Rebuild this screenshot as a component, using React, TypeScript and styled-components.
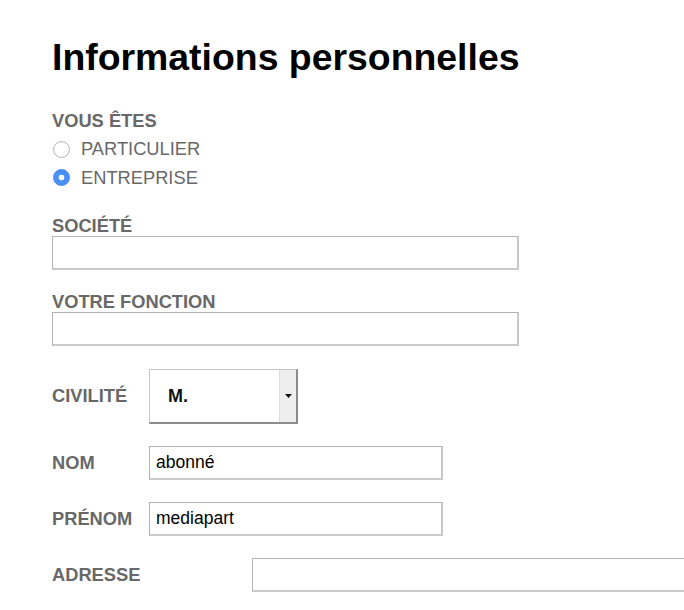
import React from "react";
import styled, { createGlobalStyle } from "styled-components";

const GlobalStyle = createGlobalStyle`
  html, body {
    margin: 0;
    padding: 0;
    background: #fff;
    overflow: hidden;
  }
  body {
    font-family: "Liberation Sans", Arial, Helvetica, sans-serif;
  }
`;

const Page = styled.div`
  box-sizing: border-box;
  padding: 36px 0 0 52px;
  width: 684px;
  overflow: hidden;
`;

const Title = styled.h1`
  margin: 0 0 28px;
  font-size: 37.4px;
  font-weight: bold;
  line-height: normal;
  color: #000;
`;

const Form = styled.form`
  display: flex;
  flex-direction: column;
  gap: 22.25px;
`;

const RadioGroup = styled.div`
  display: flex;
  flex-direction: column;
  margin-bottom: 2px;
  font-size: 18.3px;
  line-height: 28.3px;
  color: #686868;
`;

const GroupTitle = styled.div`
  font-weight: bold;
`;

const RadioRow = styled.label`
  display: flex;
  align-items: center;
  gap: 11px;
`;

const Radio = styled.input`
  appearance: none;
  margin: 0 0 0 1px;
  width: 17px;
  height: 17px;
  border-radius: 50%;
  border: 1px solid #b3b3b3;
  background: #fff;
  box-sizing: border-box;

  &:checked {
    border-color: #3f86ee;
    background: radial-gradient(circle, #fff 0 2.6px, #4a90f5 3.2px);
  }
`;

const Field = styled.div`
  display: flex;
  flex-direction: column;
`;

const Label = styled.label<{ $width?: number }>`
  font-size: 18.3px;
  line-height: 20px;
  font-weight: bold;
  color: #686868;
  flex: 0 0 ${(p) => (p.$width ? `${p.$width}px` : "auto")};
`;

const TextInput = styled.input<{ $width: number }>`
  flex: none;
  box-sizing: border-box;
  width: ${(p) => p.$width}px;
  height: 34px;
  margin: 0;
  padding: 0 6px;
  border-style: solid;
  border-width: 1px 2px 2px 1px;
  border-color: #b4b4b4 #c9c9c9 #c9c9c9 #b4b4b4;
  font-family: inherit;
  font-size: 17.5px;
  color: #000;
  background: #fff;
  outline: none;
`;

const InlineRow = styled.div`
  display: flex;
  align-items: center;
`;

const SelectBox = styled.div`
  display: flex;
  box-sizing: border-box;
  width: 149px;
  height: 55px;
  border-style: solid;
  border-width: 1px 2px 2px 1px;
  border-color: #c6c6c6 #8c8c8c #8c8c8c #c6c6c6;
  background: #fff;
`;

const Select = styled.select`
  appearance: none;
  flex: 1;
  min-width: 0;
  border: none;
  margin: 0;
  padding: 0 0 0 18px;
  background: transparent;
  font-family: inherit;
  font-size: 18px;
  font-weight: bold;
  color: #111;
  outline: none;
`;

const SelectArrow = styled.div`
  flex: 0 0 16px;
  display: flex;
  align-items: center;
  justify-content: center;
  background: #eeeeee;
  border-left: 1px solid #dedede;
`;

export default function App() {
  return (
    <>
      <GlobalStyle />
      <Page>
        <Title>Informations personnelles</Title>
        <Form>
          <RadioGroup>
            <GroupTitle>VOUS ÊTES</GroupTitle>
            <RadioRow>
              <Radio type="radio" name="type" />
              PARTICULIER
            </RadioRow>
            <RadioRow>
              <Radio type="radio" name="type" defaultChecked />
              ENTREPRISE
            </RadioRow>
          </RadioGroup>

          <Field>
            <Label htmlFor="societe">SOCIÉTÉ</Label>
            <TextInput id="societe" $width={467} />
          </Field>

          <Field>
            <Label htmlFor="fonction">VOTRE FONCTION</Label>
            <TextInput id="fonction" $width={467} />
          </Field>

          <InlineRow>
            <Label $width={97} htmlFor="civilite">
              CIVILITÉ
            </Label>
            <SelectBox>
              <Select id="civilite" defaultValue="M.">
                <option>M.</option>
                <option>Mme</option>
              </Select>
              <SelectArrow>
                <svg width="7" height="4" viewBox="0 0 7 4">
                  <path d="M0 0h7L3.5 4z" fill="#111" />
                </svg>
              </SelectArrow>
            </SelectBox>
          </InlineRow>

          <InlineRow>
            <Label $width={97} htmlFor="nom">
              NOM
            </Label>
            <TextInput id="nom" $width={294} defaultValue="abonné" />
          </InlineRow>

          <InlineRow>
            <Label $width={97} htmlFor="prenom">
              PRÉNOM
            </Label>
            <TextInput id="prenom" $width={294} defaultValue="mediapart" />
          </InlineRow>

          <InlineRow>
            <Label $width={200} htmlFor="adresse">
              ADRESSE
            </Label>
            <TextInput id="adresse" $width={467} />
          </InlineRow>
        </Form>
      </Page>
    </>
  );
}
